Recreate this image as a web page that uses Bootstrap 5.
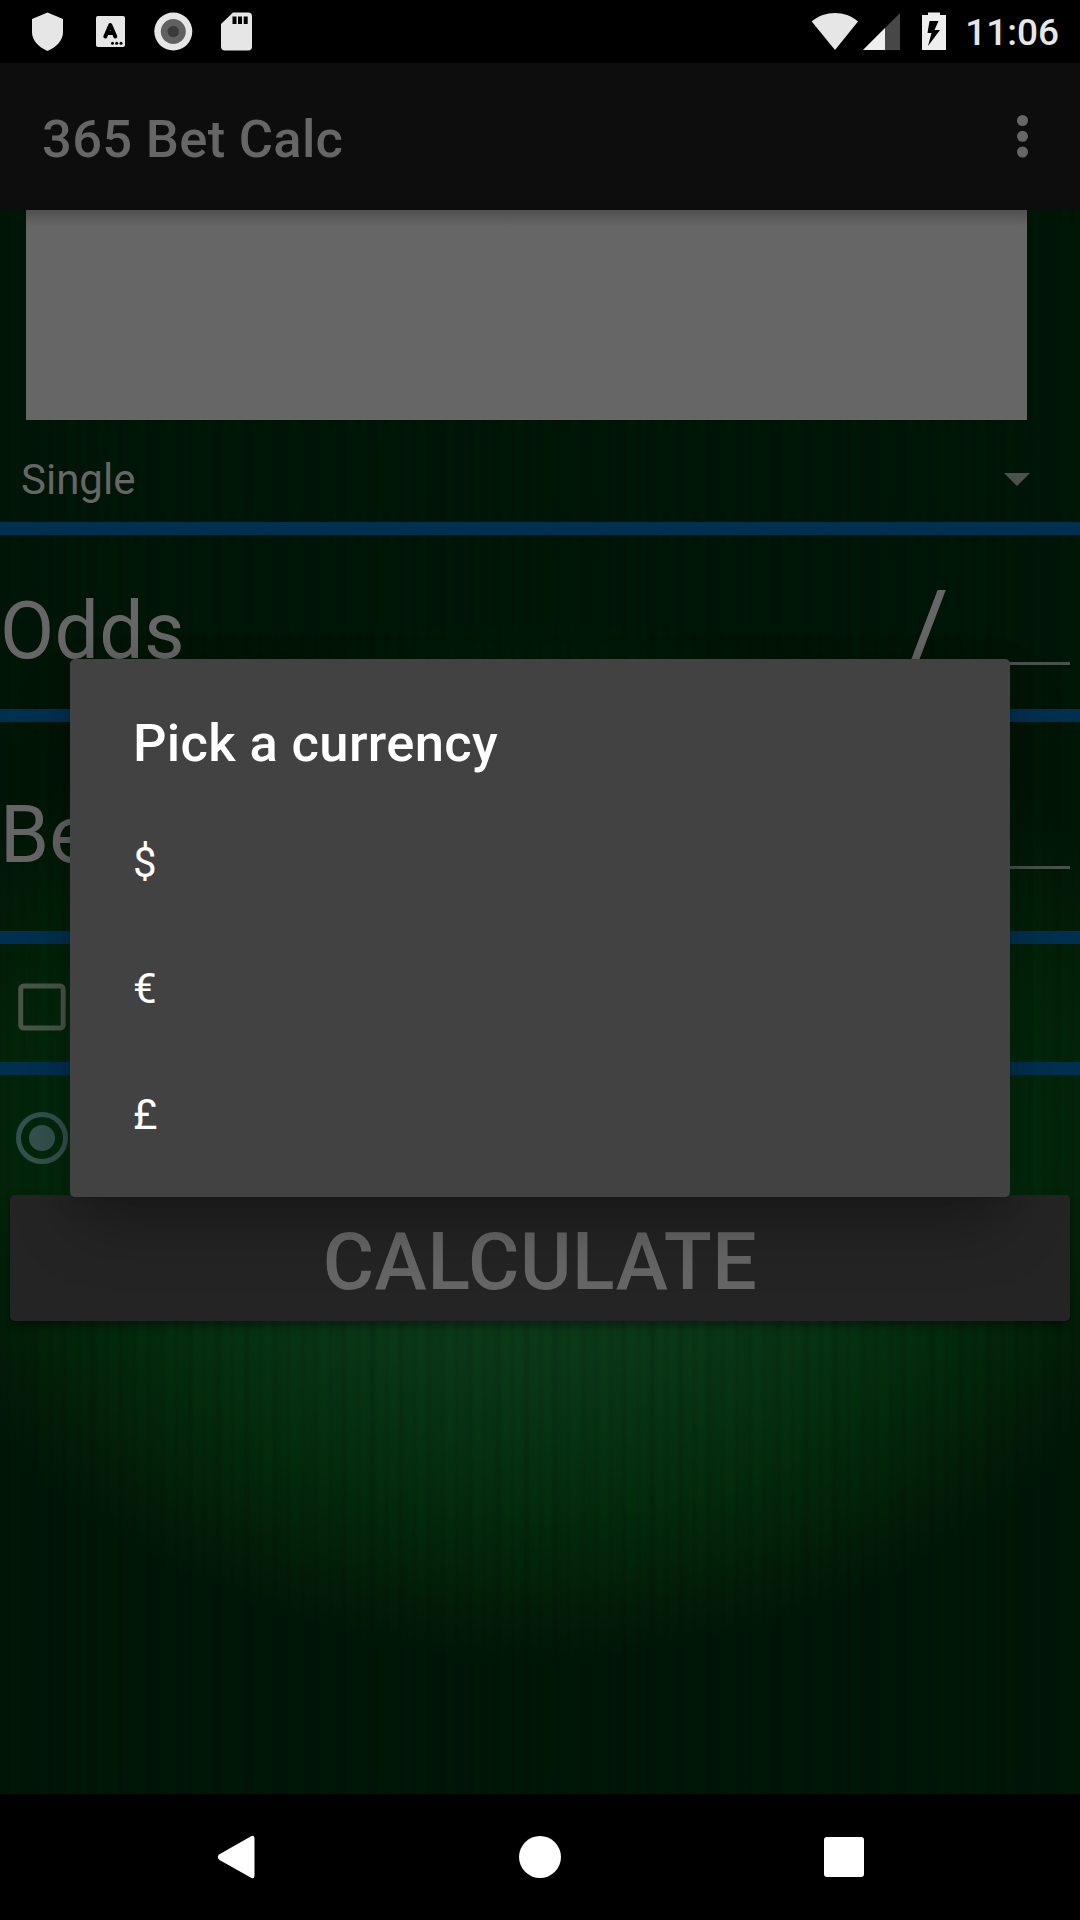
<!DOCTYPE html>
<html lang="en">
<head>
<meta charset="utf-8">
<meta name="viewport" content="width=device-width, initial-scale=1">
<title>365 Bet Calc</title>
<link href="https://cdn.jsdelivr.net/npm/bootstrap@5.3.0/dist/css/bootstrap.min.css" rel="stylesheet">
<style>
  body { font-family: Roboto, "Noto Sans", sans-serif; width: 1080px; height: 1920px; overflow: hidden; background: #000; color: #666; }
  svg { display: block; flex: none; }
  .status { height: 63px; color: #e6e6e6; }
  .clock { font-size: 37px; line-height: 63px; font-weight: 500; padding: 1px 21px 0 0; }
  .appbar { height: 147px; background: #0d0d0d; padding: 0 47px 0 42px; z-index: 2; }
  .appbar h1 { font-size: 52.5px; font-weight: 500; line-height: 62px; padding-top: 4px; letter-spacing: .3px; }
  .felt { height: 1584px; background:
      repeating-linear-gradient(90deg, rgba(0,0,0,0) 0 4px, rgba(0,0,0,.09) 8px 9px, rgba(0,0,0,0) 13px 14px),
      repeating-linear-gradient(90deg, rgba(0,0,0,.06) 0 2px, rgba(0,0,0,0) 9px 22px, rgba(0,0,0,.06) 29px 31px),
      radial-gradient(635px 500px at 540px 930px, #10421d 0, #0d3d19 30%, #0a3917 45%, #063312 60%, #032b0c 75%, #022309 87%, #021c07 96%, #001607 104%, #001607 100%); }
  .result { height: 210px; margin: 0 53px 0 26px; background: linear-gradient(#505050, #666 16px); }
  .spinner { height: 102px; padding: 17px 50px 0 21px; font-size: 42px; }
  .rule { height: 13px; background: #003050; }
  .big { font-size: 78.75px; line-height: 92px; letter-spacing: .3px; }
  .odds { height: 174px; padding-top: 50px; padding-right: 10px; }
  .bet { height: 209px; padding-top: 67px; padding-right: 10px; }
  .field { height: 3px; background: #4a524b; }
  .odds .field { width: 120px; margin-top: 77px; }
  .bet .field { width: 300px; margin-top: 77px; }
  .slash { font-size: 105px; margin-right: 1px; }
  .check { height: 118px; padding: 8px 0 0 10px; }
  .radio { height: 120px; padding: 5px 0 0 10px; }
  .calc { height: 126px; margin: 0 10px; border-radius: 5px; background: #242424; color: #666; border: 0; font-size: 78.75px; font-weight: 500; line-height: 126px; padding: 4px 0 0; letter-spacing: .55px; box-shadow: 0 5px 10px rgba(0,0,0,.4); }
  .picker { left: 70px; top: 659px; width: 940px; height: 538px; background: #424242; color: #fff; border-radius: 5px; padding: 47px 63px 0; z-index: 5; box-shadow: 0 34px 60px -8px rgba(0,0,0,.3), 0 0 24px rgba(0,0,0,.15); }
  .picker h2 { font-size: 52.5px; font-weight: 500; line-height: 74px; margin: 0 0 19px; letter-spacing: .36px; }
  .picker .list-group { --bs-list-group-bg: transparent; --bs-list-group-color: #fff; }
  .picker .list-group-item { height: 126px; font-size: 42px; border: 0; }
  .navkeys { height: 126px; padding: 0 216px; }
</style>
</head>
<body class="position-relative">
<header class="status d-flex align-items-center justify-content-between">
  <svg width="270" height="63" fill="#e6e6e6">
    <path d="M47.500 12.500 63 19v13c0 8-6 15-15.500 19C38 47 32 40 32 32V19z"/>
    <rect x="96" y="16" width="29" height="31" rx="2"/>
    <path d="M105.300 36.500 110.300 25 115.300 36.500M107.500 33h6" fill="none" stroke="#000" stroke-width="4" stroke-linecap="round" stroke-linejoin="round"/>
    <g fill="#000"><circle cx="112.500" cy="43.300" r="1.500"/><circle cx="116.700" cy="43.300" r="1.500"/><circle cx="121" cy="43.300" r="1.500"/></g>
    <circle cx="173.300" cy="31.500" r="19"/><circle cx="173.300" cy="31.500" r="12.500" fill="#616161"/><circle cx="173.300" cy="31.500" r="5.700" fill="#3a3a3a"/>
    <path d="M233 12.500h15a4 4 0 0 1 4 4v30a4 4 0 0 1-4 4h-23a4 4 0 0 1-4-4V24z"/>
    <path d="M232.500 16.500h4V24h-4zm5.500 0h4V24h-4zm5.700 0h4V24h-4z" fill="#000"/>
  </svg>
  <div class="d-flex">
    <svg width="154" height="63" fill="#e6e6e6">
      <path d="M.7 21.500C14 10.300 34 10.300 47 21.500L24 50z"/>
      <path d="M89 13v37H52z" fill="#474747"/><path d="M52 50 74 28v22z" fill="#efefef"/>
      <path d="M117 12.500h12V15h6v35h-24V15h6z" fill="#eee"/>
      <path d="M118.500 21h9l-4 9h5.500L117 46l3.500-13h-4z" fill="#000"/>
    </svg>
    <div class="clock">11:06</div>
  </div>
</header>
<nav class="appbar position-relative d-flex align-items-center justify-content-between">
  <h1 class="m-0">365 Bet Calc</h1>
  <svg width="21" height="44" fill="#666"><circle cx="10.500" cy="5.500" r="5.500"/><circle cx="10.500" cy="21.300" r="5.500"/><circle cx="10.500" cy="37" r="5.500"/></svg>
</nav>
<main class="felt d-flex flex-column">
  <div class="result"></div>
  <div class="spinner d-flex align-items-center justify-content-between">
    <span>Single</span>
    <svg width="26" height="14"><path d="M0 0h26L13 13z" fill="#4a524b"/></svg>
  </div>
  <div class="rule"></div>
  <div class="odds d-flex">
    <span class="big me-auto">Odds</span><span class="big slash">/</span><div class="field"></div>
  </div>
  <div class="rule"></div>
  <div class="bet d-flex justify-content-between">
    <span class="big">Bet</span><div class="field"></div>
  </div>
  <div class="rule"></div>
  <div class="check d-flex align-items-center">
    <svg width="64" height="64"><rect x="10.700" y="11" width="42.500" height="42" rx="3" fill="none" stroke="#4a554a" stroke-width="5"/></svg>
  </div>
  <div class="rule"></div>
  <div class="radio d-flex align-items-start">
    <svg width="64" height="116"><circle cx="32" cy="58" r="23.500" fill="none" stroke="#33514e" stroke-width="5"/><circle cx="32" cy="58" r="13" fill="#33514e"/></svg>
  </div>
  <button class="calc btn" type="button">CALCULATE</button>
</main>
<section class="picker position-absolute" role="dialog" aria-label="Pick a currency">
  <h2>Pick a currency</h2>
  <ul class="list-group list-group-flush">
    <li class="list-group-item d-flex align-items-center p-0">$</li>
    <li class="list-group-item d-flex align-items-center p-0">€</li>
    <li class="list-group-item d-flex align-items-center p-0">£</li>
  </ul>
</section>
<footer class="navkeys d-flex align-items-center justify-content-between">
  <svg width="40" height="46" fill="#fff"><path d="M35.500 2Q38.500.8 38.500 4.500V41.500Q38.500 45 35.500 44L3.500 26Q0 23 3.500 20.300z"/></svg>
  <svg width="42" height="42" fill="#fff"><circle cx="21" cy="21" r="21"/></svg>
  <svg width="40" height="40" fill="#fff"><rect width="40" height="40" rx="3"/></svg>
</footer>
<script src="https://cdn.jsdelivr.net/npm/bootstrap@5.3.0/dist/js/bootstrap.bundle.min.js"></script>
</body>
</html>
